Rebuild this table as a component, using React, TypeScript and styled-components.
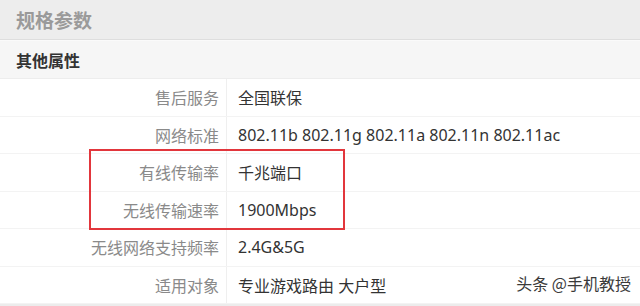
import styled, { createGlobalStyle } from "styled-components";

const GlobalStyle = createGlobalStyle`
  html, body {
    margin: 0;
    padding: 0;
    background: #ffffff;
  }
  body {
    width: 640px;
    height: 306px;
    overflow: hidden;
    font-family: "Noto Sans CJK SC", "Noto Sans", sans-serif;
  }
`;

type Spec = {
  label: string;
  value: string;
};

const specs: Spec[] = [
  { label: "售后服务", value: "全国联保" },
  { label: "网络标准", value: "802.11b 802.11g 802.11a 802.11n 802.11ac" },
  { label: "有线传输率", value: "千兆端口" },
  { label: "无线传输速率", value: "1900Mbps" },
  { label: "无线网络支持频率", value: "2.4G&5G" },
  { label: "适用对象", value: "专业游戏路由 大户型" },
];

function App() {
  return (
    <>
      <GlobalStyle />
      <Page>
        <Title>规格参数</Title>
        <Section>其他属性</Section>
        <Rows>
          {specs.map((spec) => (
            <Row key={spec.label}>
              <Label>{spec.label}</Label>
              <Value>{spec.value}</Value>
            </Row>
          ))}
          <Highlight />
          <Watermark>头条 @手机教授</Watermark>
        </Rows>
      </Page>
    </>
  );
}

const Page = styled.div`
  width: 640px;
  height: 306px;
  display: flex;
  flex-direction: column;
  background: #ffffff;
  border-bottom: 2px solid #ececec;
  box-sizing: border-box;
`;

const Title = styled.div`
  height: 40px;
  box-sizing: border-box;
  padding-left: 16px;
  display: flex;
  align-items: center;
  background: #ededed;
  border-bottom: 1px solid #dedede;
  color: #9a9a9a;
  font-size: 19px;
  font-weight: 700;
  line-height: 1;
`;

const Section = styled.div`
  height: 39px;
  box-sizing: border-box;
  padding-left: 16px;
  display: flex;
  align-items: center;
  background: #f6f6f6;
  border-top: 1px solid #fafafa;
  border-bottom: 1px solid #ededed;
  color: #333333;
  font-size: 16px;
  font-weight: 700;
`;

const Rows = styled.div`
  position: relative;
  flex: 1;
  display: flex;
  flex-direction: column;
`;

const Row = styled.div`
  height: 37.5px;
  box-sizing: border-box;
  display: grid;
  grid-template-columns: 227px 1fr;
  border-bottom: 1px solid #f3f3f3;

  &:last-of-type {
    border-bottom: none;
  }
`;

const Label = styled.div`
  display: flex;
  align-items: center;
  justify-content: flex-end;
  padding-right: 7px;
  border-right: 1px solid #efefef;
  color: #8a8a8a;
  font-size: 16px;
`;

const Value = styled.div`
  display: flex;
  align-items: center;
  padding-left: 11px;
  color: #333333;
  font-family: "Noto Sans", "Noto Sans CJK SC", sans-serif;
  font-size: 16px;
  white-space: nowrap;
`;

const Highlight = styled.div`
  position: absolute;
  left: 89px;
  top: 70px;
  width: 256px;
  height: 81px;
  box-sizing: border-box;
  border: 2px solid #e2363c;
  pointer-events: none;
`;

const Watermark = styled.div`
  position: absolute;
  right: 9px;
  bottom: 9px;
  color: #3a3a3a;
  font-size: 16px;
  text-shadow: 0 0 2px #ffffff;
`;

export default App;
